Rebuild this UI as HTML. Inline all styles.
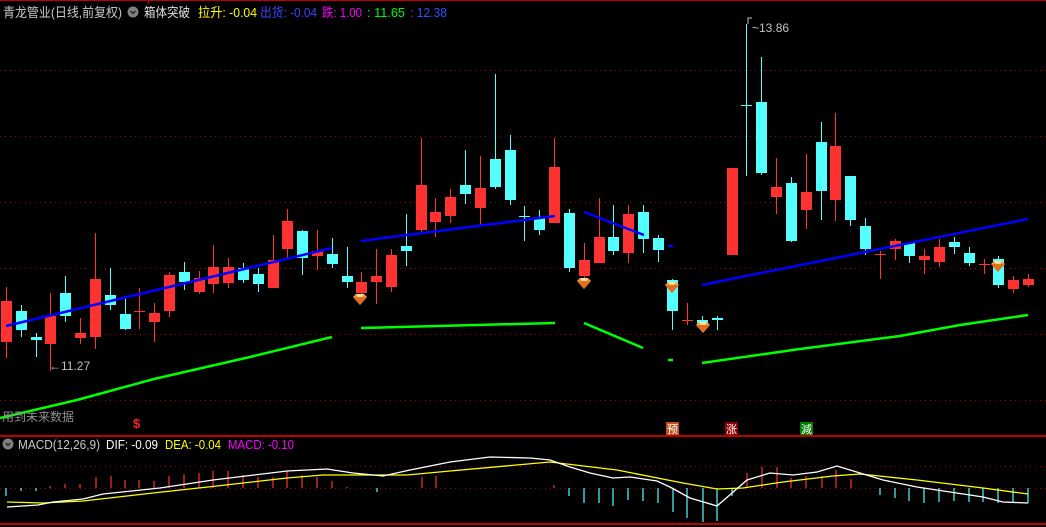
<!DOCTYPE html>
<html><head><meta charset="utf-8"><style>
html,body{margin:0;padding:0;background:#000;width:1046px;height:527px;overflow:hidden}
svg{display:block}
text{font-family:"Liberation Sans","Noto Sans CJK SC",sans-serif}
</style></head><body>
<svg width="1046" height="527" viewBox="0 0 1046 527" xmlns="http://www.w3.org/2000/svg">
<defs>
<g id="gem"><polygon points="-7,-3 -4,-6 4,-6 7,-3 0,5" fill="#f0a040"/><polygon points="-7,-3 7,-3 0,5" fill="#e07020"/><polygon points="-4,-6 4,-6 2,-3 -2,-3" fill="#ffe0a0"/></g>
</defs>
<rect x="0" y="0" width="1046" height="1" fill="#c00000"/>
<rect x="148" y="0" width="1" height="4" fill="#c00000"/>
<g stroke="#a00000" stroke-dasharray="1,4" stroke-width="1">
<line x1="0" y1="70.5" x2="1046" y2="70.5"/><line x1="0" y1="136.5" x2="1046" y2="136.5"/><line x1="0" y1="202.5" x2="1046" y2="202.5"/><line x1="0" y1="268.5" x2="1046" y2="268.5"/><line x1="0" y1="334.5" x2="1046" y2="334.5"/><line x1="0" y1="400.5" x2="1046" y2="400.5"/>
<line x1="0" y1="466.5" x2="1046" y2="466.5"/><line x1="0" y1="488.5" x2="1046" y2="488.5"/>
</g>
<rect x="0" y="435" width="1046" height="2" fill="#c00000"/>
<rect x="0" y="523" width="1046" height="2" fill="#c00000"/>

<!-- header -->
<g font-size="13" lengthAdjust="spacingAndGlyphs">
<text x="3" y="17" fill="#c8c8c8" textLength="119" lengthAdjust="spacingAndGlyphs">青龙管业(日线,前复权)</text>
<text x="144" y="17" fill="#e0e0e0" textLength="46" lengthAdjust="spacingAndGlyphs">箱体突破</text>
<text x="198" y="17" fill="#ffff00" textLength="59" lengthAdjust="spacingAndGlyphs">拉升: -0.04</text>
<text x="260" y="17" fill="#4040ff" textLength="57" lengthAdjust="spacingAndGlyphs">出货: -0.04</text>
<text x="322" y="17" fill="#ff00ff" textLength="40" lengthAdjust="spacingAndGlyphs">跌: 1.00</text>
<text x="367" y="17" fill="#00ff00" textLength="38" lengthAdjust="spacingAndGlyphs">: 11.65</text>
<text x="410" y="17" fill="#3050ff" textLength="37" lengthAdjust="spacingAndGlyphs">: 12.38</text>
</g>
<circle cx="133" cy="12" r="5.5" fill="#808080"/><path d="M130.5 11l2.5 2.5 2.5-2.5" stroke="#222" stroke-width="1.3" fill="none"/>

<!-- candles -->
<g stroke-width="1">
<g fill="#ff3232" stroke="#ff3232">
<line x1="6.5" y1="287" x2="6.5" y2="358"/><rect x="1" y="301" width="11" height="41" stroke="none"/>
<line x1="50.5" y1="293" x2="50.5" y2="371"/><rect x="45" y="316" width="11" height="28" stroke="none"/>
<line x1="80.5" y1="318" x2="80.5" y2="344"/><rect x="75" y="333" width="11" height="5" stroke="none"/>
<line x1="95.5" y1="233" x2="95.5" y2="349"/><rect x="90" y="279" width="11" height="58" stroke="none"/>
<line x1="139.5" y1="288" x2="139.5" y2="329"/><rect x="134" y="311" width="11" height="1" stroke="none"/>
<line x1="154.5" y1="303" x2="154.5" y2="342"/><rect x="149" y="313" width="11" height="9" stroke="none"/>
<line x1="169.5" y1="272" x2="169.5" y2="317"/><rect x="164" y="275" width="11" height="36" stroke="none"/>
<line x1="199.5" y1="271" x2="199.5" y2="294"/><rect x="194" y="278" width="11" height="14" stroke="none"/>
<line x1="213.5" y1="245" x2="213.5" y2="293"/><rect x="208" y="267" width="11" height="17" stroke="none"/>
<line x1="228.5" y1="258" x2="228.5" y2="288"/><rect x="223" y="267" width="11" height="16" stroke="none"/>
<line x1="273.5" y1="235" x2="273.5" y2="288"/><rect x="268" y="260" width="11" height="28" stroke="none"/>
<line x1="287.5" y1="209" x2="287.5" y2="258"/><rect x="282" y="221" width="11" height="28" stroke="none"/>
<line x1="317.5" y1="230" x2="317.5" y2="270"/><rect x="312" y="251" width="11" height="5" stroke="none"/>
<line x1="361.5" y1="272" x2="361.5" y2="300"/><rect x="356" y="282" width="11" height="11" stroke="none"/>
<line x1="376.5" y1="249" x2="376.5" y2="304"/><rect x="371" y="276" width="11" height="6" stroke="none"/>
<line x1="391.5" y1="249" x2="391.5" y2="292"/><rect x="386" y="255" width="11" height="32" stroke="none"/>
<line x1="421.5" y1="138" x2="421.5" y2="232"/><rect x="416" y="185" width="11" height="45" stroke="none"/>
<line x1="435.5" y1="198" x2="435.5" y2="237"/><rect x="430" y="212" width="11" height="10" stroke="none"/>
<line x1="450.5" y1="189" x2="450.5" y2="223"/><rect x="445" y="197" width="11" height="19" stroke="none"/>
<line x1="480.5" y1="156" x2="480.5" y2="225"/><rect x="475" y="188" width="11" height="20" stroke="none"/>
<line x1="554.5" y1="138" x2="554.5" y2="223"/><rect x="549" y="167" width="11" height="56" stroke="none"/>
<line x1="584.5" y1="243" x2="584.5" y2="282"/><rect x="579" y="260" width="11" height="16" stroke="none"/>
<line x1="599.5" y1="198" x2="599.5" y2="263"/><rect x="594" y="237" width="11" height="26" stroke="none"/>
<line x1="628.5" y1="205" x2="628.5" y2="263"/><rect x="623" y="214" width="11" height="39" stroke="none"/>
<line x1="687.5" y1="303" x2="687.5" y2="325"/><rect x="682" y="320" width="11" height="1" stroke="none"/>
<rect x="727" y="168" width="11" height="87" stroke="none"/>
<line x1="776.5" y1="158" x2="776.5" y2="214"/><rect x="771" y="187" width="11" height="10" stroke="none"/>
<line x1="806.5" y1="154" x2="806.5" y2="229"/><rect x="801" y="192" width="11" height="18" stroke="none"/>
<line x1="835.5" y1="113" x2="835.5" y2="221"/><rect x="830" y="146" width="11" height="54" stroke="none"/>
<line x1="880.5" y1="251" x2="880.5" y2="279"/><rect x="875" y="254" width="11" height="1" stroke="none"/>
<line x1="895.5" y1="239" x2="895.5" y2="260"/><rect x="890" y="241" width="11" height="8" stroke="none"/>
<line x1="924.5" y1="249" x2="924.5" y2="274"/><rect x="919" y="256" width="11" height="4" stroke="none"/>
<line x1="939.5" y1="239" x2="939.5" y2="267"/><rect x="934" y="247" width="11" height="15" stroke="none"/>
<line x1="984.5" y1="259" x2="984.5" y2="274"/><rect x="979" y="264" width="11" height="1" stroke="none"/>
<line x1="1013.5" y1="276" x2="1013.5" y2="293"/><rect x="1008" y="280" width="11" height="9" stroke="none"/>
<line x1="1028.5" y1="274" x2="1028.5" y2="287"/><rect x="1023" y="279" width="11" height="6" stroke="none"/>
</g>
<g fill="#54ffff" stroke="#54ffff">
<line x1="21.5" y1="305" x2="21.5" y2="337"/><rect x="16" y="311" width="11" height="19" stroke="none"/>
<line x1="36.5" y1="333" x2="36.5" y2="357"/><rect x="31" y="337" width="11" height="3" stroke="none"/>
<line x1="65.5" y1="276" x2="65.5" y2="322"/><rect x="60" y="293" width="11" height="23" stroke="none"/>
<line x1="110.5" y1="268" x2="110.5" y2="310"/><rect x="105" y="295" width="11" height="10" stroke="none"/>
<line x1="125.5" y1="296" x2="125.5" y2="330"/><rect x="120" y="314" width="11" height="15" stroke="none"/>
<line x1="184.5" y1="262" x2="184.5" y2="290"/><rect x="179" y="272" width="11" height="10" stroke="none"/>
<line x1="243.5" y1="263" x2="243.5" y2="283"/><rect x="238" y="268" width="11" height="12" stroke="none"/>
<line x1="258.5" y1="268" x2="258.5" y2="292"/><rect x="253" y="274" width="11" height="10" stroke="none"/>
<line x1="302.5" y1="230" x2="302.5" y2="275"/><rect x="297" y="231" width="11" height="27" stroke="none"/>
<line x1="332.5" y1="238" x2="332.5" y2="268"/><rect x="327" y="254" width="11" height="10" stroke="none"/>
<line x1="347.5" y1="247" x2="347.5" y2="288"/><rect x="342" y="276" width="11" height="6" stroke="none"/>
<line x1="406.5" y1="214" x2="406.5" y2="266"/><rect x="401" y="246" width="11" height="5" stroke="none"/>
<line x1="465.5" y1="150" x2="465.5" y2="204"/><rect x="460" y="185" width="11" height="9" stroke="none"/>
<line x1="495.5" y1="74" x2="495.5" y2="189"/><rect x="490" y="159" width="11" height="28" stroke="none"/>
<line x1="510.5" y1="135" x2="510.5" y2="205"/><rect x="505" y="150" width="11" height="50" stroke="none"/>
<line x1="524.5" y1="206" x2="524.5" y2="241"/><rect x="519" y="216" width="11" height="1" stroke="none"/>
<line x1="539.5" y1="210" x2="539.5" y2="235"/><rect x="534" y="218" width="11" height="12" stroke="none"/>
<line x1="569.5" y1="209" x2="569.5" y2="272"/><rect x="564" y="213" width="11" height="55" stroke="none"/>
<line x1="613.5" y1="205" x2="613.5" y2="255"/><rect x="608" y="237" width="11" height="14" stroke="none"/>
<line x1="643.5" y1="205" x2="643.5" y2="253"/><rect x="638" y="212" width="11" height="27" stroke="none"/>
<line x1="658.5" y1="235" x2="658.5" y2="262"/><rect x="653" y="238" width="11" height="12" stroke="none"/>
<line x1="672.5" y1="279" x2="672.5" y2="330"/><rect x="667" y="280" width="11" height="31" stroke="none"/>
<line x1="702.5" y1="316" x2="702.5" y2="330"/><rect x="697" y="320" width="11" height="5" stroke="none"/>
<line x1="717.5" y1="316" x2="717.5" y2="330"/><rect x="712" y="318" width="11" height="2" stroke="none"/>
<line x1="746.5" y1="24" x2="746.5" y2="176"/><rect x="741" y="105" width="11" height="1" stroke="none"/>
<line x1="761.5" y1="57" x2="761.5" y2="175"/><rect x="756" y="102" width="11" height="71" stroke="none"/>
<line x1="791.5" y1="177" x2="791.5" y2="242"/><rect x="786" y="183" width="11" height="58" stroke="none"/>
<line x1="821.5" y1="122" x2="821.5" y2="220"/><rect x="816" y="142" width="11" height="49" stroke="none"/>
<line x1="850.5" y1="176" x2="850.5" y2="226"/><rect x="845" y="176" width="11" height="44" stroke="none"/>
<line x1="865.5" y1="218" x2="865.5" y2="255"/><rect x="860" y="226" width="11" height="23" stroke="none"/>
<line x1="909.5" y1="242" x2="909.5" y2="263"/><rect x="904" y="243" width="11" height="13" stroke="none"/>
<line x1="954.5" y1="237" x2="954.5" y2="254"/><rect x="949" y="242" width="11" height="5" stroke="none"/>
<line x1="969.5" y1="247" x2="969.5" y2="266"/><rect x="964" y="253" width="11" height="10" stroke="none"/>
<line x1="998.5" y1="256" x2="998.5" y2="288"/><rect x="993" y="259" width="11" height="26" stroke="none"/>
</g>
</g>

<!-- trend lines -->
<g stroke="#0000ff" stroke-width="2.5" fill="none">
<line x1="6" y1="326" x2="332" y2="248"/><line x1="361" y1="241" x2="555" y2="216"/><line x1="584" y1="212" x2="644" y2="235"/><line x1="668" y1="246" x2="673" y2="246"/><line x1="702" y1="285" x2="1028" y2="219"/>
</g>
<g stroke="#00ff00" stroke-width="2.5" fill="none">
<polyline points="0,418 77,400 154,379 250,357 332,337"/><line x1="361" y1="328" x2="555" y2="323"/><line x1="584" y1="323" x2="643" y2="348"/><line x1="668" y1="360" x2="673" y2="360"/><polyline points="702,363 800,349 900,336 960,325 1028,315"/>
</g>

<use href="#gem" x="360" y="300"/><use href="#gem" x="584" y="284"/><use href="#gem" x="672" y="288"/><use href="#gem" x="703" y="328"/><use href="#gem" x="998" y="267"/>

<text x="49" y="370" font-size="12" fill="#c0c0c0">←11.27</text>
<path d="M748 24v-6h4" stroke="#c0c0c0" fill="none"/>
<text x="752" y="32" font-size="12" fill="#c0c0c0">~13.86</text>
<text x="2" y="421" font-size="12" fill="#909090">用到未来数据</text>
<text x="133" y="428" font-size="13" fill="#ff2020" font-weight="bold">$</text>
<rect x="666" y="422" width="13" height="13" fill="#c0501a"/><text x="667" y="433" font-size="11" fill="#fff">预</text>
<rect x="725" y="422" width="13" height="13" fill="#8b0000"/><text x="726" y="433" font-size="11" fill="#fff">涨</text>
<rect x="800" y="422" width="13" height="13" fill="#008000"/><text x="801" y="433" font-size="11" fill="#fff">減</text>

<!-- MACD -->
<circle cx="8" cy="444" r="5.5" fill="#808080"/><path d="M5.5 443l2.5 2.5 2.5-2.5" stroke="#222" stroke-width="1.3" fill="none"/>
<text x="18" y="449" font-size="13" fill="#c8c8c8" textLength="82" lengthAdjust="spacingAndGlyphs">MACD(12,26,9)</text>
<text x="106" y="449" font-size="13" fill="#ffffff" textLength="52" lengthAdjust="spacingAndGlyphs">DIF: -0.09</text>
<text x="165" y="449" font-size="13" fill="#ffff00" textLength="56" lengthAdjust="spacingAndGlyphs">DEA: -0.04</text>
<text x="228" y="449" font-size="13" fill="#ff00ff" textLength="66" lengthAdjust="spacingAndGlyphs">MACD: -0.10</text>
<g stroke="#ff3232" stroke-width="1.2">
<line x1="50" y1="488" x2="50" y2="486"/><line x1="65" y1="488" x2="65" y2="484"/><line x1="80" y1="488" x2="80" y2="484"/><line x1="96" y1="488" x2="96" y2="477"/><line x1="111" y1="488" x2="111" y2="476"/><line x1="125" y1="488" x2="125" y2="480"/><line x1="139" y1="488" x2="139" y2="480"/><line x1="154" y1="488" x2="154" y2="481"/><line x1="169" y1="488" x2="169" y2="476"/><line x1="184" y1="488" x2="184" y2="474"/><line x1="199" y1="488" x2="199" y2="473"/><line x1="213" y1="488" x2="213" y2="471"/><line x1="228" y1="488" x2="228" y2="471"/><line x1="243" y1="488" x2="243" y2="475"/><line x1="258" y1="488" x2="258" y2="477"/><line x1="273" y1="488" x2="273" y2="477"/><line x1="287" y1="488" x2="287" y2="471"/><line x1="302" y1="488" x2="302" y2="475"/><line x1="317" y1="488" x2="317" y2="477"/><line x1="332" y1="488" x2="332" y2="481"/><line x1="347" y1="488" x2="347" y2="487"/><line x1="422" y1="488" x2="422" y2="477"/><line x1="436" y1="488" x2="436" y2="476"/><line x1="554" y1="488" x2="554" y2="485"/>
<line x1="747" y1="488" x2="747" y2="473"/><line x1="762" y1="488" x2="762" y2="467"/><line x1="777" y1="488" x2="777" y2="467"/><line x1="791" y1="488" x2="791" y2="478"/><line x1="806" y1="488" x2="806" y2="476"/><line x1="822" y1="488" x2="822" y2="476"/><line x1="836" y1="488" x2="836" y2="470"/><line x1="851" y1="488" x2="851" y2="479"/>
</g>
<g stroke="#54ffff" stroke-width="1.2">
<line x1="6" y1="488" x2="6" y2="496"/><line x1="21" y1="488" x2="21" y2="491"/><line x1="36" y1="488" x2="36" y2="491"/><line x1="377" y1="488" x2="377" y2="492"/>
<line x1="569" y1="488" x2="569" y2="496"/><line x1="584" y1="488" x2="584" y2="503"/><line x1="599" y1="488" x2="599" y2="503"/><line x1="613" y1="488" x2="613" y2="506"/><line x1="628" y1="488" x2="628" y2="500"/><line x1="643" y1="488" x2="643" y2="501"/><line x1="658" y1="488" x2="658" y2="503"/><line x1="673" y1="488" x2="673" y2="512"/><line x1="687" y1="488" x2="687" y2="518"/><line x1="703" y1="488" x2="703" y2="522"/><line x1="717" y1="488" x2="717" y2="521"/><line x1="732" y1="488" x2="732" y2="496"/>
<line x1="880" y1="488" x2="880" y2="495"/><line x1="895" y1="488" x2="895" y2="498"/><line x1="909" y1="488" x2="909" y2="501"/><line x1="924" y1="488" x2="924" y2="503"/><line x1="939" y1="488" x2="939" y2="502"/><line x1="954" y1="488" x2="954" y2="501"/><line x1="969" y1="488" x2="969" y2="502"/><line x1="983" y1="488" x2="983" y2="502"/><line x1="998" y1="488" x2="998" y2="503"/><line x1="1013" y1="488" x2="1013" y2="503"/><line x1="1028" y1="488" x2="1028" y2="503"/>
</g>
<polyline fill="none" stroke="#ffff00" stroke-width="1.3" points="7,502 43,503 83,501 153,493 217,486 287,478 323,475 407,475 450,471 550,462 617,470 683,483 717,489 743,488 783,482 833,476 860,474 917,480 983,488 1028,494"/>
<polyline fill="none" stroke="#ffffff" stroke-width="1.3" points="7,507 38,505 53,502 83,499 103,494 160,488 213,480 287,471 327,469 353,473 383,476 410,470 450,462 490,457 530,458 550,460 570,467 590,473 613,478 630,477 657,481 670,487 690,498 717,506 747,480 770,473 793,475 817,472 837,466 860,473 883,480 917,487 950,492 983,497 1003,502 1028,503"/>
</svg>
</body></html>
